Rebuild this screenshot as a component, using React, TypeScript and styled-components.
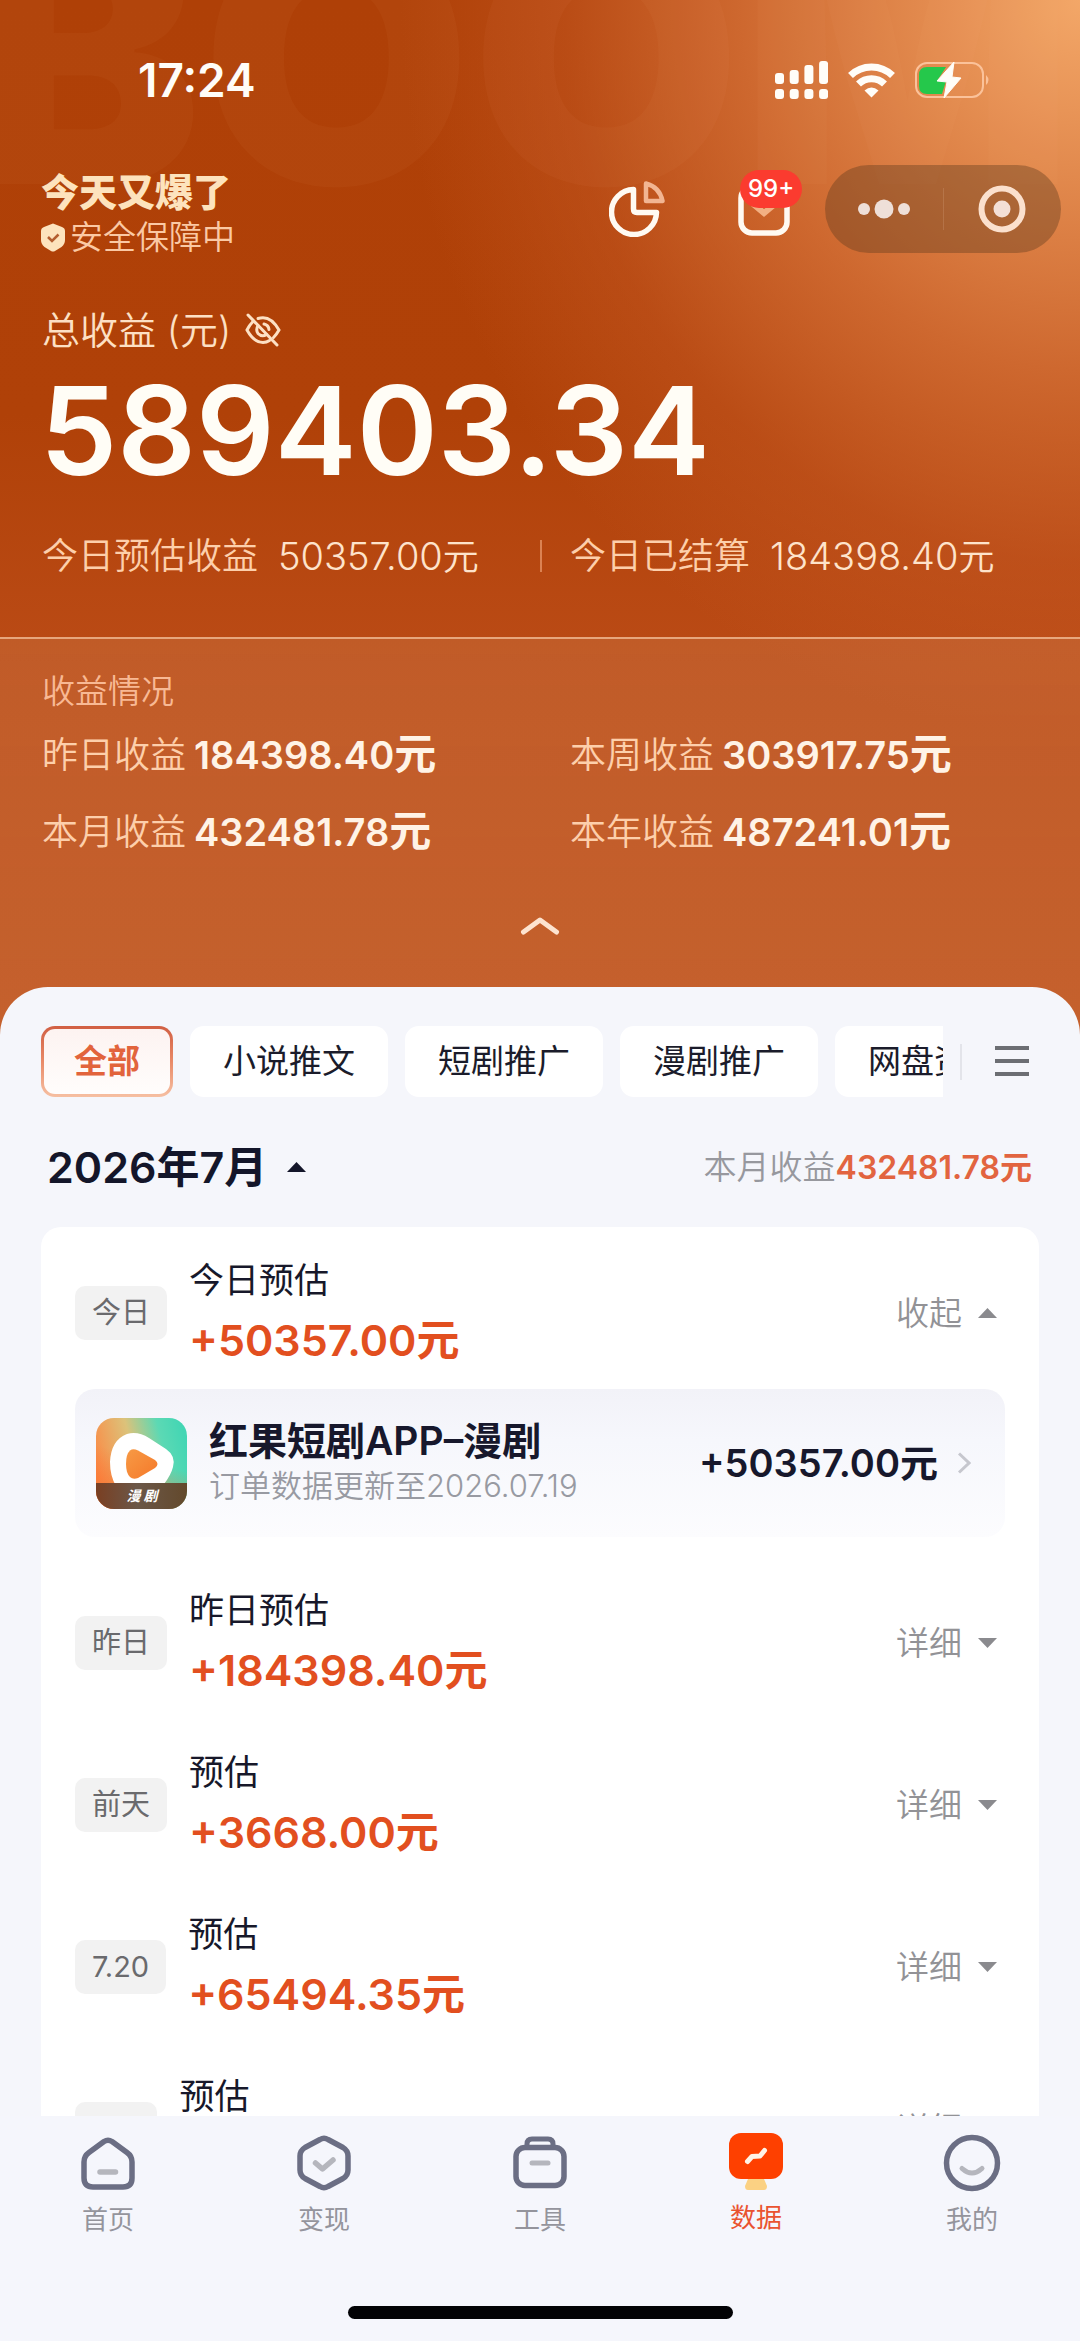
import React from "react";
import styled, { createGlobalStyle, css } from "styled-components";

const GlobalStyle = createGlobalStyle`
  * { box-sizing: border-box; }
  body {
    margin: 0;
    font-family: Inter, "Noto Sans CJK SC", sans-serif;
    -webkit-font-smoothing: antialiased;
  }
  button {
    margin: 0;
    padding: 0;
    border: 0;
    background: none;
    font: inherit;
    color: inherit;
    cursor: pointer;
  }
  a { color: inherit; text-decoration: none; }
  h1, h2, p, dl, dd, dt, ul { margin: 0; padding: 0; }
  svg { display: block; flex: none; }
`;

const Screen = styled.div`
  display: flex;
  flex-direction: column;
  height: 100vh;
  overflow: hidden;
  background: #f5f6fc;
`;

/* ---------- hero ---------- */

const Hero = styled.header`
  position: relative;
  flex: none;
  overflow: hidden;
  color: #fde0c4;
  background:
    radial-gradient(ellipse 680px 740px at 100% 0%, rgba(243, 167, 104, 1) 0%, rgba(228, 140, 80, 0.94) 25%, rgba(216, 117, 60, 0.75) 50%, rgba(200, 92, 40, 0.42) 76%, rgba(190, 78, 26, 0) 100%),
    linear-gradient(180deg, #af4007 0%, #b04108 40%, #bb4b16 64%, #bc4b17 100%);
`;

const Watermark = styled.div`
  position: absolute;
  top: -136px;
  left: -31px;
  font-size: 348px;
  line-height: 388px;
  font-weight: 900;
  white-space: nowrap;
  color: rgba(255, 190, 130, 0.045);
  pointer-events: none;
`;

const HeroBody = styled.div`
  position: relative;
  padding-bottom: 57px;
`;

const StatusBar = styled.div`
  display: flex;
  align-items: center;
  justify-content: space-between;
  padding: 52px 90px 0 138px;
  color: #fffdf8;
`;

const Clock = styled.time`
  font-size: 46px;
  line-height: 56px;
  font-weight: 600;
`;

const StatusIcons = styled.div`
  display: flex;
  align-items: center;
  gap: 20px;
`;

const TopRow = styled.div`
  display: flex;
  align-items: flex-start;
  justify-content: space-between;
  margin-top: 57px;
  padding: 0 19px 0 41px;
`;

const Brand = styled.div`
  padding-top: 5px;
`;

const BrandTitle = styled.h1`
  font-size: 38px;
  line-height: 44px;
  font-weight: 900;
  color: #fde3bd;
`;

const BrandNote = styled.p`
  display: flex;
  align-items: center;
  gap: 5px;
  font-size: 33px;
  line-height: 46px;
  font-weight: 350;
  color: #fbc9a4;
`;

const Actions = styled.div`
  display: flex;
  align-items: center;
  height: 88px;
`;

const ActionButton = styled.button<{ $gap: number }>`
  position: relative;
  margin-right: ${(p) => p.$gap}px;
`;

const Count = styled.span`
  position: absolute;
  top: -12px;
  left: 2px;
  padding: 0 8px;
  border-radius: 19px;
  background: #fb3b2f;
  color: #fff;
  font-size: 24px;
  line-height: 38px;
  font-weight: 500;
`;

const Capsule = styled.div`
  display: flex;
  align-items: center;
  width: 236px;
  height: 88px;
  border-radius: 44px;
  background: rgba(98, 60, 30, 0.4);
`;

const CapsuleButton = styled.button`
  display: flex;
  flex: 1;
  align-items: center;
  justify-content: center;
  height: 42px;
  & + & {
    border-left: 1px solid rgba(255, 225, 205, 0.14);
  }
`;

const TotalLabel = styled.p`
  display: flex;
  align-items: center;
  gap: 14px;
  margin-top: 46px;
  padding: 0 42px;
  font-size: 38px;
  line-height: 48px;
  font-weight: 350;
`;

const TotalAmount = styled.p`
  margin-top: 17px;
  padding: 0 40px;
  font-size: 123px;
  line-height: 120px;
  font-weight: 600;
  color: #fffdf6;
`;

const PairGrid = styled.dl<{ $top: number }>`
  display: grid;
  grid-template-columns: 1fr 1fr;
  row-gap: 29px;
  margin-top: ${(p) => p.$top}px;
  padding: 0 42px;
`;

const Pair = styled.div<{ $gap: number }>`
  display: flex;
  align-items: center;
  gap: ${(p) => p.$gap}px;
  height: 48px;
  line-height: 48px;
  white-space: nowrap;
  &:nth-child(even) {
    padding-left: 30px;
  }
`;

const Divided = styled(Pair)`
  &::before {
    content: "";
    width: 2px;
    height: 32px;
    margin: 0 ${(p) => 28 - p.$gap}px 0 -30px;
    background: rgba(255, 190, 150, 0.5);
  }
`;

const PairName = styled.dt`
  font-size: 36px;
  font-weight: 350;
  color: #fdcfab;
`;

const PairValue = styled.dd<{ $strong?: boolean }>`
  font-size: 38px;
  font-weight: ${(p) => (p.$strong ? 600 : 350)};
  color: ${(p) => (p.$strong ? "#fff3e6" : "#fee3cb")};
`;

const Unit = styled.span<{ $size: number }>`
  font-size: ${(p) => p.$size}px;
  line-height: 1;
`;

const StatsPanel = styled.section`
  position: relative;
  padding: 30px 0 99px;
  border-top: 2px solid rgba(255, 214, 180, 0.6);
  background: linear-gradient(180deg, rgba(215, 150, 105, 0.22), rgba(220, 155, 105, 0.27));
`;

const StatsTitle = styled.h2`
  padding: 0 42px;
  font-size: 33px;
  line-height: 44px;
  font-weight: 350;
  color: #f8b994;
`;

const Collapse = styled.button`
  display: block;
  margin: 60px auto 0;
`;

/* ---------- sheet ---------- */

const Sheet = styled.main`
  position: relative;
  display: flex;
  flex: 1;
  flex-direction: column;
  min-height: 0;
  margin-top: -48px;
  padding: 39px 41px 0;
  border-radius: 48px 48px 0 0;
  background: #f5f6fb;
  overflow: hidden;
`;

const TabBar = styled.div`
  display: flex;
  flex: none;
  align-items: center;
`;

const TabList = styled.div`
  display: flex;
  flex: 1;
  gap: 17px;
  min-width: 0;
  overflow: hidden;
`;

const Tab = styled.button<{ $active?: boolean }>`
  flex: none;
  padding: 0 30px;
  border: 3px solid transparent;
  border-radius: 14px;
  background: #fff;
  font-size: 33px;
  line-height: 65px;
  color: #1b1c2b;
  white-space: nowrap;
  ${(p) =>
    p.$active &&
    css`
      background:
        linear-gradient(#fdf3f1, #fffdfc) padding-box,
        linear-gradient(180deg, #d15f43, #e98a68 50%, #f6bfa2) border-box;
      font-weight: 700;
      color: #e2643c;
    `}
`;

const TabMore = styled.button`
  display: flex;
  flex: none;
  align-items: center;
  gap: 33px;
  width: 96px;
  padding: 0 10px 0 17px;
  &::before {
    content: "";
    flex: none;
    width: 2px;
    height: 36px;
    background: #e3e4ea;
  }
`;

const MonthBar = styled.div`
  display: flex;
  flex: none;
  align-items: center;
  justify-content: space-between;
  height: 56px;
  margin-top: 42px;
  padding: 0 7px 0 6px;
  line-height: 56px;
`;

const MonthButton = styled.button`
  display: flex;
  align-items: center;
  gap: 20px;
  font-size: 43px;
  font-weight: 600;
  color: #14162a;
`;

const MonthTotal = styled.p`
  font-size: 33px;
  font-weight: 350;
  color: #97989e;
  strong {
    font-size: 32px;
    font-weight: 600;
    color: #e26440;
  }
`;

const Card = styled.ul`
  flex: 1;
  min-height: 0;
  margin-top: 32px;
  padding: 30px 34px 0;
  border-radius: 20px 20px 0 0;
  background: #fff;
  list-style: none;
  overflow: hidden;
`;

const Entry = styled.li`
  margin-bottom: 50px;
`;

const EntryRow = styled.div`
  display: flex;
  align-items: center;
  height: 112px;
`;

const DayBadge = styled.span`
  flex: none;
  margin-right: 22px;
  padding: 0 17px;
  border-radius: 10px;
  background: #f2f2f2;
  font-size: 29px;
  line-height: 54px;
  color: #6a6a6d;
`;

const EntryText = styled.div`
  display: grid;
  flex: 1;
  gap: 2px;
  padding-top: 2px;
`;

const EntryName = styled.p`
  font-size: 35px;
  line-height: 50px;
  color: #17182a;
`;

const EntryAmount = styled.p`
  font-size: 43px;
  line-height: 66px;
  font-weight: 600;
  color: #e24f1f;
`;

const Toggle = styled.button`
  display: flex;
  align-items: center;
  gap: 16px;
  padding-right: 8px;
  font-size: 33px;
  line-height: 48px;
  font-weight: 350;
  color: #929296;
`;

const Source = styled.a`
  display: flex;
  align-items: center;
  height: 148px;
  margin-top: 20px;
  padding: 0 34px 0 21px;
  border-radius: 20px;
  background: linear-gradient(180deg, #f2f2f8 0%, #f6f7fc 35%, #fcfcfe 100%);
`;

const SourceText = styled.div`
  flex: 1;
  margin-left: 22px;
`;

const SourceName = styled.p`
  font-size: 39px;
  line-height: 46px;
  font-weight: 600;
  color: #17182c;
`;

const SourceNote = styled.p`
  font-size: 31px;
  line-height: 44px;
  font-weight: 350;
  color: #989aa2;
`;

const SourceAmount = styled.span`
  margin-right: 20px;
  font-size: 38px;
  line-height: 48px;
  font-weight: 600;
  color: #17182c;
`;

/* ---------- bottom navigation ---------- */

const BottomBar = styled.footer`
  flex: none;
  padding-bottom: 22px;
  background: #f5f6fc;
`;

const Nav = styled.nav`
  display: grid;
  grid-template-columns: repeat(5, 1fr);
  height: 190px;
  padding-top: 17px;
`;

const NavLink = styled.a<{ $active?: boolean }>`
  display: flex;
  flex-direction: column;
  align-items: center;
  gap: ${(p) => (p.$active ? 5 : 7)}px;
  font-size: 26px;
  line-height: 40px;
  color: ${(p) => (p.$active ? "#ea5330" : "#94949c")};
`;

const HomeIndicator = styled.div`
  width: 385px;
  height: 13px;
  margin: 0 auto;
  border-radius: 7px;
  background: #020205;
`;

/* ---------- icons ---------- */

const SignalIcon = () => (
  <svg width="53" height="38" viewBox="0 0 53 38" fill="#fffdf8">
    {[12, 9, 4, 0].map((top, i) => (
      <React.Fragment key={top}>
        <rect x={i * 14.7} y={top} width="9" height={23 - top} rx="3" />
        <rect x={i * 14.7} y="28" width="9" height="10" rx="3" />
      </React.Fragment>
    ))}
  </svg>
);

const WifiIcon = () => (
  <svg width="47" height="35" viewBox="0 0 47 35" fill="none" stroke="#fffdf8" strokeWidth="7">
    <path d="M2.5 12.5 A30 30 0 0 1 44.500 12.500" />
    <path d="M10.500 21 A18.500 18.500 0 0 1 36.500 21" />
    <path d="M23.500 34.500 L16.500 27.500 Q23.500 21.500 30.500 27.500 Z" fill="#fffdf8" stroke="none" />
  </svg>
);

const BatteryIcon = () => (
  <svg width="75" height="38" viewBox="0 0 75 38" fill="none">
    <rect x="1" y="2" width="67" height="34" rx="11" stroke="#fbc29a" strokeWidth="2" />
    <path d="M71 14 Q76 19 71 24 Z" fill="#fbc29a" />
    <path d="M12 6 H31 L22 20 H31 L27 33 H12 Q4 33 4 25 V14 Q4 6 12 6 Z" fill="#25c84b" />
    <path d="M39 1 L22 20 L32 21 L29 37 L46 17 L37 16 Z" fill="#fffdf8" stroke="#fffdf8" strokeWidth="1" strokeLinejoin="round" />
  </svg>
);

const ShieldIcon = () => (
  <svg width="24" height="29" viewBox="0 0 24 29">
    <path d="M12 0.500 L21 4 Q24 5 24 8 V17 Q24 21 20.500 24 L14 28 Q12 29 10 28 L3.500 24 Q0 21 0 17 V8 Q0 5 3 4 Z" fill="#fde3bd" />
    <path d="M7 14 L11 18 L17.500 11.500" fill="none" stroke="#b45e30" strokeWidth="2.500" />
  </svg>
);

const EyeOffIcon = () => (
  <svg width="36" height="34" viewBox="0 0 36 34" fill="none" stroke="#fde0c4" strokeWidth="3" strokeLinecap="round">
    <path d="M3 2 L32 32" />
    <path d="M13 5.500 Q15.500 4.700 18 4.700 Q27 4.700 34 17 Q31.500 21.500 28.500 24.500" />
    <path d="M8 8.500 Q4.500 12 2 17 Q9 29.500 18 29.500 Q21.500 29.500 24.500 27.500" />
    <path d="M13 12.500 Q10.500 17 13 20.500 Q17 24.500 21.500 21.500" />
    <path d="M19 11 Q23.500 12 24 16.500" />
  </svg>
);

const PieIcon = () => (
  <svg width="56" height="56" viewBox="0 0 56 56" fill="none" strokeLinejoin="round">
    <path d="M24.500 8.500 A22.500 22.500 0 1 0 47.500 31.500 H28 Q24.500 31.500 24.500 28 Z" stroke="#fffaf2" strokeWidth="5.500" />
    <path d="M37 2.500 Q50.500 6 53.500 20 H37 Z" stroke="#f2b592" strokeWidth="4.500" />
  </svg>
);

const InboxIcon = () => (
  <svg width="52" height="54" viewBox="0 0 52 54" fill="none">
    <path d="M15 22 L26 31 L37 22" stroke="#f2b083" strokeWidth="6" />
    <rect x="3" y="5" width="46" height="46" rx="11" stroke="#fffaf2" strokeWidth="5.500" />
  </svg>
);

const DotsIcon = () => (
  <svg width="52" height="20" viewBox="0 0 52 20" fill="#eedfd8">
    <circle cx="6" cy="10" r="6" />
    <circle cx="26" cy="10" r="9.500" />
    <circle cx="46" cy="10" r="6" />
  </svg>
);

const TargetIcon = () => (
  <svg width="48" height="48" viewBox="0 0 48 48">
    <circle cx="24" cy="24" r="20.500" fill="none" stroke="#fbe0cd" strokeWidth="6" />
    <circle cx="24" cy="24" r="8.500" fill="#f3dfd6" />
  </svg>
);

const ChevronUp = () => (
  <svg width="40" height="20" viewBox="0 0 40 20" fill="none" stroke="#fde3cf" strokeWidth="5" strokeLinecap="round" strokeLinejoin="round">
    <path d="M3.500 16 L20 4 L36.500 16" />
  </svg>
);

const ChevronRight = () => (
  <svg width="13" height="22" viewBox="0 0 13 22" fill="none" stroke="#c6c7ce" strokeWidth="3">
    <path d="M1 1.500 L11 11 L1 20.500" />
  </svg>
);

const Caret = ({ up, color }: { up?: boolean; color: string }) => (
  <svg width="19" height="10" viewBox="0 0 19 10" fill={color}>
    <path d={up ? "M0 10 L9.500 0 L19 10 Z" : "M0 0 L9.500 10 L19 0 Z"} />
  </svg>
);

const MenuIcon = () => (
  <svg width="34" height="31" viewBox="0 0 34 31" fill="#6c6e73">
    <rect y="0" width="34" height="4" />
    <rect y="13" width="34" height="4" />
    <rect y="26" width="34" height="4" />
  </svg>
);

const AppLogo = () => (
  <svg width="91" height="91" viewBox="0 0 91 91">
    <defs>
      <linearGradient id="logoBase" x1="0" y1="0.550" x2="1" y2="0.300">
        <stop offset="0" stopColor="#fb8a45" />
        <stop offset="0.420" stopColor="#dcc27a" />
        <stop offset="0.750" stopColor="#5cd9b4" />
        <stop offset="1" stopColor="#43d6b4" />
      </linearGradient>
      <linearGradient id="logoFoot" x1="0.300" y1="0" x2="0" y2="1">
        <stop offset="0.350" stopColor="#fb6a2c" stopOpacity="0" />
        <stop offset="0.900" stopColor="#f8702f" stopOpacity="0.700" />
      </linearGradient>
      <linearGradient id="logoPlay" x1="0" y1="0" x2="1" y2="1">
        <stop offset="0" stopColor="#f79a45" />
        <stop offset="1" stopColor="#f5792a" />
      </linearGradient>
      <linearGradient id="logoStrip" x1="0" y1="0" x2="1" y2="0">
        <stop offset="0" stopColor="#7a3f22" />
        <stop offset="0.450" stopColor="#6b5748" />
        <stop offset="1" stopColor="#63492c" />
      </linearGradient>
      <clipPath id="logoClip">
        <rect width="91" height="91" rx="18" />
      </clipPath>
    </defs>
    <g clipPath="url(#logoClip)">
      <rect width="91" height="91" fill="url(#logoBase)" />
      <rect width="91" height="91" fill="url(#logoFoot)" />
      <path d="M31 16 Q42 13 53 20 L70 31 Q80 38 77 49 Q75 57 68 66 L44 78 Q28 80 20 68 Q14 58 14 44 Q15 22 31 16 Z" fill="#fff" />
      <path d="M34 32.500 Q37 30 42 32.500 L59 42 Q64 46 59 50 L42 60 Q37 62 34 59 Q30 55 30 46 Q30 36 34 32.500 Z" fill="url(#logoPlay)" />
      <rect y="65" width="91" height="26" fill="url(#logoStrip)" />
      <text x="46" y="83" textAnchor="middle" fontSize="14" fontWeight="700" fontStyle="italic" fontFamily='"Noto Sans CJK SC", sans-serif' fill="#fff">
        漫 剧
      </text>
    </g>
  </svg>
);

const NAV_INK = "#6b6e84";
const NAV_FAINT = "#b5b6bd";

const NavIcon = ({ children }: { children: React.ReactNode }) => (
  <svg width="60" height="60" viewBox="0 0 60 60" fill="none" stroke={NAV_INK} strokeWidth="5.500" strokeLinecap="round" strokeLinejoin="round">
    {children}
  </svg>
);

const HomeIcon = () => (
  <NavIcon>
    <path d="M26 8.500 Q30 6 34 8.500 L49 19.500 Q54 23 54 29 V45 Q54 54 45 54 H15 Q6 54 6 45 V29 Q6 23 11 19.500 Z" />
    <path d="M22 39 H37.500" stroke={NAV_FAINT} />
  </NavIcon>
);

const EarnIcon = () => (
  <NavIcon>
    <path d="M26 6.500 Q30 4 34 6.500 L49 14.500 Q54 17.500 54 23 V37 Q54 42.500 49 45.500 L34 53.500 Q30 56 26 53.500 L11 45.500 Q6 42.500 6 37 V23 Q6 17.500 11 14.500 Z" />
    <path d="M21.500 30 L28.500 36 L39 27" stroke={NAV_FAINT} />
  </NavIcon>
);

const ToolsIcon = () => (
  <NavIcon>
    <rect x="6" y="14.500" width="48" height="38" rx="9" />
    <path d="M17 13 V11 Q17 6 22 6 H38 Q43 6 43 11 V13" strokeWidth="5" />
    <path d="M22 30 H38" stroke={NAV_FAINT} strokeWidth="5" />
  </NavIcon>
);

const DataIcon = () => (
  <NavIcon>
    <path d="M22 46 H38 L41 53 Q41 57 38 57 H22 Q19 57 19 53 Z" fill="#fbd183" stroke="none" />
    <rect x="3" y="0" width="54" height="46" rx="12" fill="#fe4000" stroke="none" />
    <path d="M21.500 28.500 L26 23.500 L34 23 L38.500 17.500" stroke="#fff3e6" strokeWidth="5" />
  </NavIcon>
);

const MineIcon = () => (
  <NavIcon>
    <circle cx="30" cy="30" r="25.500" />
    <path d="M20 35.500 Q30 44.500 40 35.500" stroke={NAV_FAINT} strokeWidth="5" />
  </NavIcon>
);

/* ---------- data ---------- */

const stats = [
  { name: "昨日收益", value: "184398.40" },
  { name: "本周收益", value: "303917.75" },
  { name: "本月收益", value: "432481.78" },
  { name: "本年收益", value: "487241.01" },
];

const tabs = ["全部", "小说推文", "短剧推广", "漫剧推广", "网盘资源"];

const entries = [
  { day: "今日", name: "今日预估", amount: "+50357.00元", open: true },
  { day: "昨日", name: "昨日预估", amount: "+184398.40元" },
  { day: "前天", name: "预估", amount: "+3668.00元" },
  { day: "7.20", name: "预估", amount: "+65494.35元" },
  { day: "7.19", name: "预估", amount: "" },
];

const navItems = [
  { label: "首页", Icon: HomeIcon },
  { label: "变现", Icon: EarnIcon },
  { label: "工具", Icon: ToolsIcon },
  { label: "数据", Icon: DataIcon, active: true },
  { label: "我的", Icon: MineIcon },
];

export default function App() {
  return (
    <Screen>
      <GlobalStyle />
      <Hero>
        <Watermark aria-hidden="true">BOOM</Watermark>
        <HeroBody>
          <StatusBar>
            <Clock>17:24</Clock>
            <StatusIcons>
              <SignalIcon />
              <WifiIcon />
              <BatteryIcon />
            </StatusIcons>
          </StatusBar>

          <TopRow>
            <Brand>
              <BrandTitle>今天又爆了</BrandTitle>
              <BrandNote>
                <ShieldIcon />
                安全保障中
              </BrandNote>
            </Brand>
            <Actions>
              <ActionButton $gap={73}>
                <PieIcon />
              </ActionButton>
              <ActionButton $gap={35}>
                <InboxIcon />
                <Count>99+</Count>
              </ActionButton>
              <Capsule>
                <CapsuleButton>
                  <DotsIcon />
                </CapsuleButton>
                <CapsuleButton>
                  <TargetIcon />
                </CapsuleButton>
              </Capsule>
            </Actions>
          </TopRow>

          <TotalLabel>
            总收益 (元)
            <button>
              <EyeOffIcon />
            </button>
          </TotalLabel>
          <TotalAmount>589403.34</TotalAmount>

          <PairGrid $top={41}>
            <Pair $gap={20}>
              <PairName>今日预估收益</PairName>
              <PairValue>
                50357.00<Unit $size={36}>元</Unit>
              </PairValue>
            </Pair>
            <Divided $gap={20}>
              <PairName>今日已结算</PairName>
              <PairValue>
                184398.40<Unit $size={36}>元</Unit>
              </PairValue>
            </Divided>
          </PairGrid>
        </HeroBody>

        <StatsPanel>
          <StatsTitle>收益情况</StatsTitle>
          <PairGrid $top={18}>
            {stats.map((s) => (
              <Pair key={s.name} $gap={8}>
                <PairName>{s.name}</PairName>
                <PairValue $strong>
                  {s.value}
                  <Unit $size={42}>元</Unit>
                </PairValue>
              </Pair>
            ))}
          </PairGrid>
          <Collapse>
            <ChevronUp />
          </Collapse>
        </StatsPanel>
      </Hero>

      <Sheet>
        <TabBar>
          <TabList>
            {tabs.map((t, i) => (
              <Tab key={t} $active={i === 0}>
                {t}
              </Tab>
            ))}
          </TabList>
          <TabMore>
            <MenuIcon />
          </TabMore>
        </TabBar>

        <MonthBar>
          <MonthButton>
            2026年7月
            <Caret up color="#14162a" />
          </MonthButton>
          <MonthTotal>
            本月收益<strong>432481.78元</strong>
          </MonthTotal>
        </MonthBar>

        <Card>
          {entries.map((e) => (
            <Entry key={e.day}>
              <EntryRow>
                <DayBadge>{e.day}</DayBadge>
                <EntryText>
                  <EntryName>{e.name}</EntryName>
                  <EntryAmount>{e.amount || "\u00a0"}</EntryAmount>
                </EntryText>
                <Toggle aria-expanded={!!e.open}>
                  {e.open ? "收起" : "详细"}
                  <Caret up={e.open} color="#8a8a8e" />
                </Toggle>
              </EntryRow>
              {e.open && (
                <Source href="#source">
                  <AppLogo />
                  <SourceText>
                    <SourceName>红果短剧APP–漫剧</SourceName>
                    <SourceNote>订单数据更新至2026.07.19</SourceNote>
                  </SourceText>
                  <SourceAmount>+50357.00元</SourceAmount>
                  <ChevronRight />
                </Source>
              )}
            </Entry>
          ))}
        </Card>
      </Sheet>

      <BottomBar>
        <Nav>
          {navItems.map(({ label, Icon, active }) => (
            <NavLink key={label} href={"#" + label} $active={active}>
              <Icon />
              {label}
            </NavLink>
          ))}
        </Nav>
        <HomeIndicator />
      </BottomBar>
    </Screen>
  );
}
